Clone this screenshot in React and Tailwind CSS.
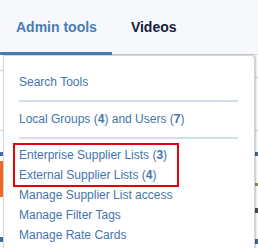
import React from 'react';

const Item = ({ children }) => (
  <div className="h-[20px] leading-[20px] text-[12px] text-[#4474b0] whitespace-nowrap">{children}</div>
);

const Sep = () => <div className="h-[2px] w-[219px] bg-[#d2deea]" />;

export default function App() {
  return (
    <div className="relative w-[258px] h-[248px] overflow-hidden bg-white" style={{ fontFamily: '"Liberation Sans", Arial, sans-serif' }}>
      {/* tabs */}
      <div className="bg-[#f7f8fc]">
        <div className="flex h-[51px] items-center">
          <div className="px-[16px] pt-[4px] text-[14px] font-bold text-[#4a7db3]">Admin tools</div>
          <div className="pl-[18px] pt-[4px] text-[14px] font-bold text-[#172038]">Videos</div>
        </div>
        <div className="flex items-end h-[4px]">
          <div className="w-[112px] h-[3px] bg-[#4a7db0]" />
          <div className="flex-1 h-[1px] bg-[#d6d8dd]" />
        </div>
      </div>

      {/* page behind the menu */}
      <div className="flex justify-between">
        <div className="w-[4px] flex flex-col">
          <div className="mt-[15px] h-[1px] bg-[#cfd6de]" />
          <div className="mt-[59px] h-[1px] bg-[#cfd6de]" />
          <div className="mt-[21px] h-[4px] bg-[#3b6fa6]" />
          <div className="mt-[5px] h-[36px] bg-[#f26a21]" />
          <div className="mt-[40px] h-[5px] bg-[#3b6fa6]" />
        </div>
        <div className="w-[3px] flex flex-col">
          <div className="mt-[22px] h-[1px] bg-[#cfd6de]" />
          <div className="mt-[52px] h-[1px] bg-[#cfd6de]" />
          <div className="mt-[21px] h-[4px] bg-[#3b6fa6]" />
          <div className="mt-[27px] h-[3px] bg-[#b08d3a]" />
          <div className="mt-[22px] h-[5px] bg-[#5a4a4a]" />
          <div className="mt-[26px] h-[5px] bg-[#3b6fa6]" />
        </div>
      </div>

      {/* dropdown menu */}
      <div className="absolute top-[55px] left-[3px] w-[252px] h-[210px] bg-white border border-[#d4d6da] rounded-tr-[4px] shadow-[1px_0_2px_rgba(0,0,0,0.25)] pl-[15px] pt-[16px]">
        <Item>Search Tools</Item>
        <div className="mt-[8px]"><Sep /></div>
        <div className="mt-[7px]">
          <Item>Local Groups (<b>4</b>) and Users (<b>7</b>)</Item>
        </div>
        <div className="mt-[8px]"><Sep /></div>
        <div className="relative mt-[6px]">
          <Item>Enterprise Supplier Lists (<b>3</b>)</Item>
          <Item>External Supplier Lists (<b>4</b>)</Item>
          <div className="absolute -top-[2px] -left-[6px] w-[166px] h-[44px] border-2 border-[#e8000b]" />
        </div>
        <Item>Manage Supplier List access</Item>
        <Item>Manage Filter Tags</Item>
        <Item>Manage Rate Cards</Item>
      </div>
    </div>
  );
}
